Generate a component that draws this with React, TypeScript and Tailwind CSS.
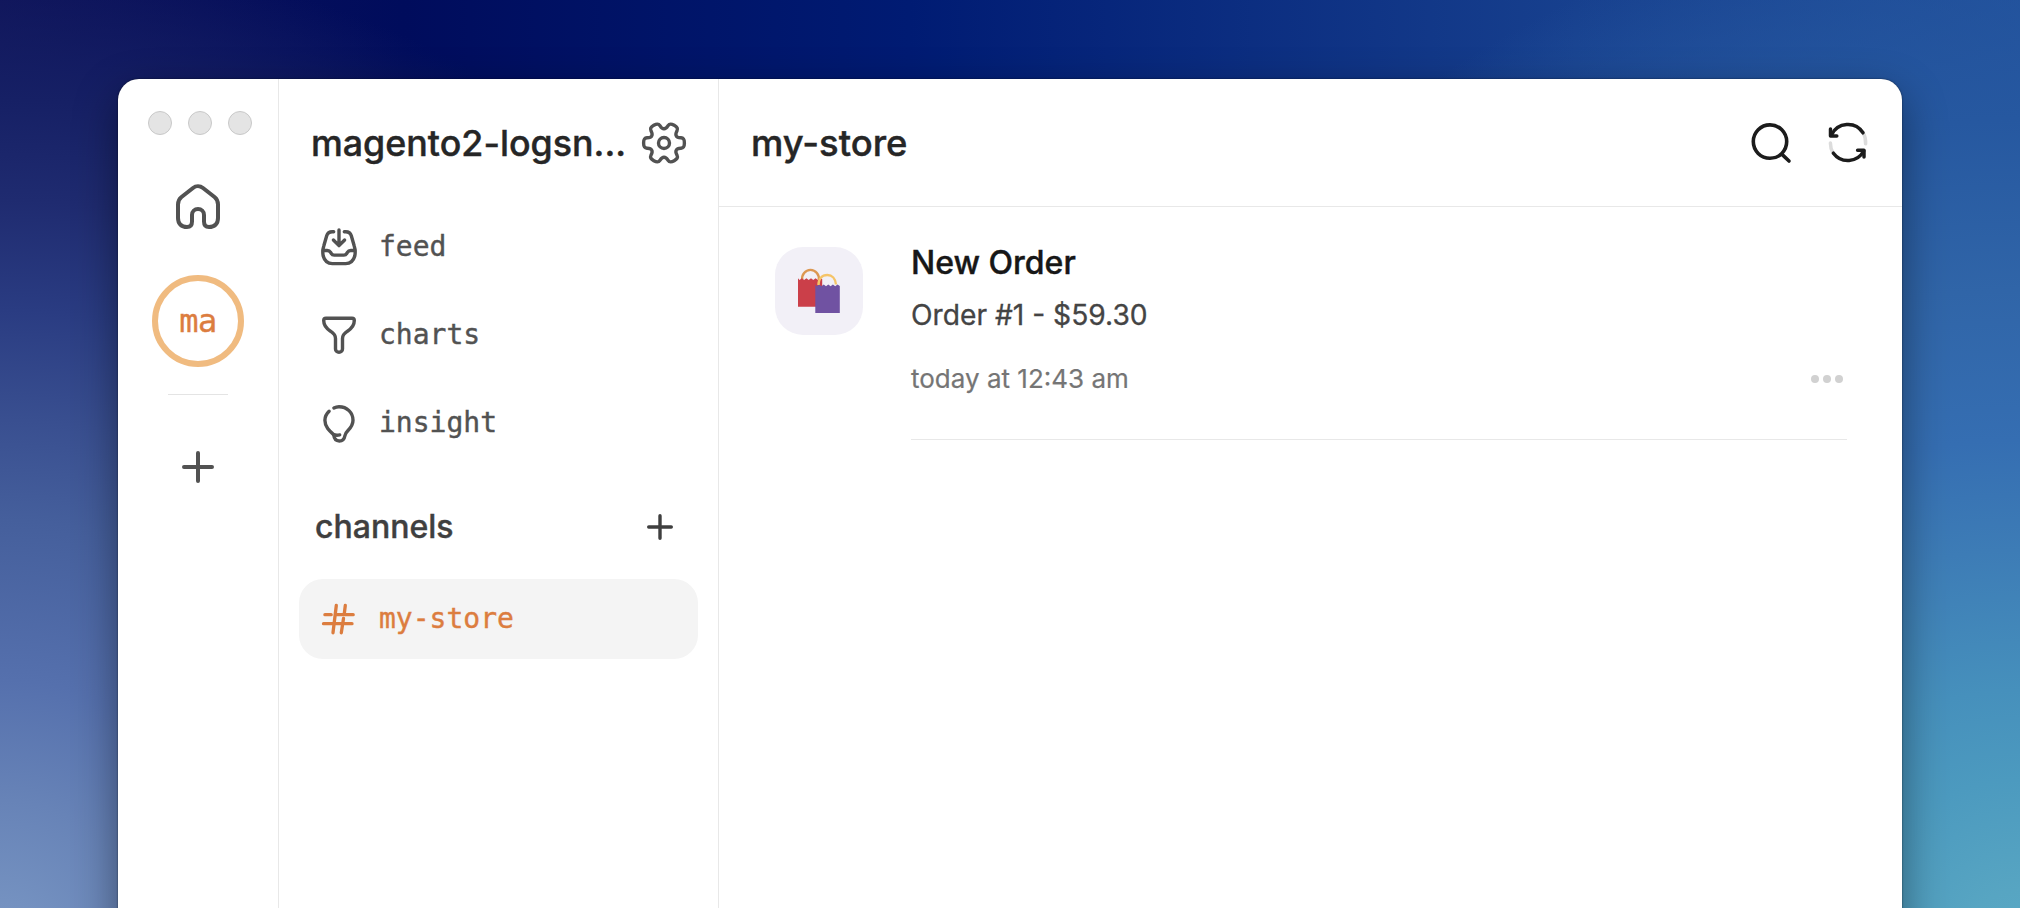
import type { ReactNode } from "react";

const sans = "font-['Inter','Liberation_Sans',sans-serif]";
const mono = "font-['DejaVu_Sans_Mono',monospace] [-webkit-text-stroke:0.4px_currentColor]";
const heading = "font-medium leading-none [-webkit-text-stroke:0.4px_currentColor]";

type IconProps = { w: number; h: number; stroke?: number; className?: string; children: ReactNode };

function Icon({ w, h, stroke = 3.4, className = "", children }: IconProps) {
  return (
    <svg
      width={w}
      height={h}
      viewBox={`0 0 ${w} ${h}`}
      fill="none"
      stroke="currentColor"
      strokeWidth={stroke}
      strokeLinecap="round"
      strokeLinejoin="round"
      className={`block shrink-0 overflow-visible ${className}`}
    >
      {children}
    </svg>
  );
}

function HomeIcon() {
  return (
    <Icon w={44} h={45} stroke={4}>
      <path d="M2 20.500V34c0 6 3.500 9 9 9 3.500 0 5-2 5-5.500V31a6 6 0 0 1 12 0v6.500c0 3.500 1.500 5.500 5 5.500 5.500 0 9-3 9-9V20.500C42 17 41 15 38.500 13L27 4C24 1.600 20 1.600 17 4L5.500 13C3 15 2 17 2 20.500Z" />
    </Icon>
  );
}

function PlusIcon({ size, stroke, className }: { size: number; stroke: number; className?: string }) {
  const c = size / 2;
  const e = stroke / 2;
  return (
    <Icon w={size} h={size} stroke={stroke} className={className}>
      <path d={`M${c} ${e}V${size - e}M${e} ${c}H${size - e}`} />
    </Icon>
  );
}

function gearOutline() {
  const rot = (x: number, y: number, deg: number) => {
    const a = (deg * Math.PI) / 180;
    return `${(22 + x * Math.cos(a) - y * Math.sin(a)).toFixed(2)} ${(21 + x * Math.sin(a) + y * Math.cos(a)).toFixed(2)}`;
  };
  let d = `M${rot(20.4, 0, 0)}`;
  for (let k = 0; k < 360; k += 60) {
    d += `C${rot(20.4, 3.6, k)} ${rot(19.6, 5, k)} ${rot(17, 5.2, k)}`;
    d += `C${rot(14.2, 5.3, k)} ${rot(13.2, 5.3, k)} ${rot(12.3, 7.1, k)}`;
    d += `C${rot(11.2, 8.8, k)} ${rot(11.7, 9.65, k)} ${rot(13, 12.12, k)}`;
    d += `C${rot(14.13, 14.47, k)} ${rot(13.32, 15.87, k)} ${rot(10.2, 17.67, k)}`;
  }
  return `${d}Z`;
}

function GearIcon() {
  return (
    <Icon w={44} h={42} stroke={3.4}>
      <path d={gearOutline()} />
      <circle cx="22" cy="21" r="5.500" />
    </Icon>
  );
}

function FeedIcon() {
  return (
    <Icon w={36} h={36}>
      <path d="M12.700 2.700H11.300C8.300 2.700 6.500 4 5.700 6.700L2.900 16.500C1.600 20.500 1.500 24 2.300 27.300 3.700 32.300 6.700 34.600 11.300 34.600H24.700C29.300 34.600 32.300 32.300 33.700 27.300 34.500 24 34.400 20.500 33.100 16.500L30.300 6.700C29.500 4 27.700 2.700 24.700 2.700H23.300" />
      <path d="M2.200 21.500h4c1.600 0 2.600.5 3.400 1.900l.6 1c.7 1.200 1.600 1.700 3 1.700h9.600c1.400 0 2.300-.5 3-1.700l.6-1c.8-1.400 1.800-1.900 3.400-1.900h4" />
      <path d="M18 1v15.500M12.400 11l5.600 5.600 5.600-5.600" />
    </Icon>
  );
}

function FunnelIcon() {
  return (
    <Icon w={36} h={38}>
      <path d="M5 2.300H31C32.500 2.300 33.300 3.200 33.300 4.600 33.300 9.500 30.500 12.700 26.500 15.200 23 17.500 21.500 19.300 21.500 22.500V33a3.500 3.200 0 0 1-7 0V22.500C14.500 19.300 13 17.500 9.500 15.200 5.500 12.700 2.700 9.500 2.700 4.600 2.700 3.200 3.500 2.300 5 2.300Z" />
    </Icon>
  );
}

function BulbIcon() {
  return (
    <Icon w={36} h={38}>
      <path d="M12.900 4C14.400 3.200 16.200 2.700 18 2.700 26 2.700 32 8.700 32 16.300 32 20.500 30 23.500 27 26.500 25 28.500 24.300 29.500 23.900 31.700 23.300 35.200 21.300 37 18.300 37 15 37 13.100 34.800 12.700 30.700 8.500 27 3.900 23 3.900 16.300 3.900 13 5.300 10 8.100 7.300" />
      <path d="M12.700 30.700c1.900.6 4 .6 6 .2" />
    </Icon>
  );
}

function HashIcon() {
  return (
    <Icon w={33} h={33} stroke={3.3}>
      <path d="M14.300 2.500 11 29.800M23.300 2.500l-1 8M21.500 15.500l-2.200 14.300M2.900 11.700h6.300M13.400 11.700h17.800M1.500 20.700H30" />
    </Icon>
  );
}

function SearchIcon() {
  return (
    <Icon w={40} h={40} stroke={3.6}>
      <circle cx="19" cy="18.600" r="16.700" />
      <path d="m31 31.400 7 6.600" />
    </Icon>
  );
}

function SyncIcon() {
  return (
    <Icon w={40} h={40} stroke={3.5}>
      <g className="text-[#dcdcdc]">
        <path stroke="currentColor" d="M35.300 10C37 13 37.800 16.500 37.600 20.800M5 30C3.200 27 2.400 24 2.400 20" />
      </g>
      <path d="M35 9.800A18 18 0 0 0 3.500 12M5.400 30.200A18 18 0 0 0 35.700 28" />
      <path d="M2.500 6v6.900h6.300M29.600 27.200h6.400v6.900" />
    </Icon>
  );
}

function BagsIcon() {
  return (
    <svg width="44" height="46" viewBox="0 0 44 46" fill="none" className="block">
      <path d="M5.200 12A8.400 8.800 0 1 1 21.800 12" stroke="#dc9852" strokeWidth="2.400" />
      <path
        d="M1 10.300l1.500 1.800 2.300-1.800 2.300 1.800 2.300-1.800 2.300 1.800 2.300-1.800 2.300 1.800 2.300-1.800 2.300 1.800 2.300-1.800 2 .8V38.700H1Z"
        fill="#cb3f49"
      />
      <path
        d="M18.300 16.500l1.500 1.800 2.300-1.800 2.300 1.800 2.300-1.800 2.300 1.800 2.300-1.800 2.300 1.800 2.300-1.800 2.300 1.800 2.300-1.800 2.300 1.500V45H18.300Z"
        fill="#7052a2"
      />
      <path d="M21.500 17C21.500 10.500 25 7 30.300 7c4.700 0 8.200 3.500 8.700 9.500" stroke="#f5c468" strokeWidth="2.400" />
    </svg>
  );
}

function NavRow({ icon, label }: { icon: ReactNode; label: string }) {
  return (
    <div className="flex h-[88px] items-center pl-[23px]">
      <div className="flex h-[38px] w-9 items-center justify-center">{icon}</div>
      <span className={`${mono} ml-[22px] text-[28px] leading-9`}>{label}</span>
    </div>
  );
}

export default function App() {
  return (
    <div
      className={`${sans} flex h-[908px] w-[2020px] overflow-hidden bg-[radial-gradient(circle_at_0px_950px,#7a96c3_0px,#7491c0_50px,#6783b7_150px,#5570ad_270px,#455f9c_430px,#394f90_530px,#2a3c82_640px,#1f2b70_750px,#162065_850px,transparent_1000px),radial-gradient(circle_at_2020px_950px,#5aa9c6_0px,#57a5c2_60px,#4c9abf_170px,#4690bc_260px,#3d7cb6_400px,#356eb2_510px,#3065a8_660px,#2658a0_830px,transparent_1050px),linear-gradient(90deg,#0e1258_0%,#000c5c_20%,#001b73_45%,#17408e_78%,#204f9b_100%)] pt-[79px] pl-[118px]`}
    >
      <div className="flex h-[900px] w-[1784px] overflow-hidden rounded-[21px] bg-white shadow-[0_16px_44px_rgba(0,0,0,0.42),0_0_2px_rgba(0,0,0,0.6)]">
        <aside className="flex w-[161px] flex-col items-center border-r border-[#e8e8e8]">
          <div className="mt-8 flex gap-4 self-start pl-[30px]">
            <span className="size-6 rounded-full border border-[#c9c9c9] bg-[#e4e4e4]" />
            <span className="size-6 rounded-full border border-[#c9c9c9] bg-[#e4e4e4]" />
            <span className="size-6 rounded-full border border-[#c9c9c9] bg-[#e4e4e4]" />
          </div>
          <div className="mt-[49px] text-[#525252]">
            <HomeIcon />
          </div>
          <div
            className={`${mono} mt-[46px] flex size-[92px] items-center justify-center rounded-full border-[6px] border-[#f0bb80] text-[32px] leading-none tracking-[-0.5px] text-[#dc7d3f]`}
          >
            ma
          </div>
          <div className="mt-[27px] h-px w-[60px] bg-[#e4e4e4]" />
          <div className="mt-14 text-[#525252]">
            <PlusIcon size={32} stroke={4} />
          </div>
        </aside>

        <nav className="flex w-[440px] flex-col border-r border-[#e8e8e8]">
          <div className="flex h-32 items-center pl-8 text-[#262626]">
            <h1 className={`${heading} w-[331px] pt-0.5 text-[35.800px] whitespace-nowrap`}>magento2-logsn...</h1>
            <div className="text-[#525252]">
              <GearIcon />
            </div>
          </div>
          <div className="-mt-[4px] pl-[19px] text-[#525252]">
            <NavRow icon={<FeedIcon />} label="feed" />
            <NavRow icon={<FunnelIcon />} label="charts" />
            <NavRow icon={<BulbIcon />} label="insight" />
          </div>
          <div className="mt-10 flex h-10 items-center justify-between pr-[45px] pl-9 text-[#3f3f3f]">
            <h2 className={`${heading} text-[32px]`}>channels</h2>
            <PlusIcon size={26} stroke={3.4} />
          </div>
          <div className="mt-8 ml-5 flex h-20 w-[399px] items-center rounded-[24px] bg-[#f4f4f4] pl-[23px] text-[#dc7d3f]">
            <HashIcon />
            <span className={`${mono} ml-[24px] text-[28px] leading-9`}>my-store</span>
          </div>
        </nav>

        <main className="flex flex-1 flex-col">
          <header className="flex h-32 items-center border-b border-[#e8e8e8] pr-[34px] pl-8 text-[#1c1c1c]">
            <h2 className={`${heading} flex-1 pt-0.5 text-[36.400px] text-[#262626]`}>my-store</h2>
            <div className="flex items-center gap-[37px]">
              <SearchIcon />
              <SyncIcon />
            </div>
          </header>
          <article className="flex pt-10 pl-14">
            <div className="flex size-[88px] shrink-0 items-center justify-center rounded-[28px] bg-[#f2f0f7]">
              <BagsIcon />
            </div>
            <div className="ml-12 flex h-[193px] w-[936px] flex-col border-b border-[#e8e8e8]">
              <h3 className={`${heading} text-[32px] text-[#171717]`}>New Order</h3>
              <p className="mt-5 text-[28.200px] leading-8 text-[#444444] [-webkit-text-stroke:0.3px_currentColor]">
                Order #1 - $59.30
              </p>
              <div className="mt-8 flex items-center justify-between pr-1">
                <time className="text-[26px] leading-8 text-[#757575] [-webkit-text-stroke:0.2px_currentColor]">
                  today at 12:43 am
                </time>
                <div className="flex gap-1">
                  <span className="size-2 rounded-full bg-[#d1d1d1]" />
                  <span className="size-2 rounded-full bg-[#d1d1d1]" />
                  <span className="size-2 rounded-full bg-[#d1d1d1]" />
                </div>
              </div>
            </div>
          </article>
        </main>
      </div>
    </div>
  );
}
